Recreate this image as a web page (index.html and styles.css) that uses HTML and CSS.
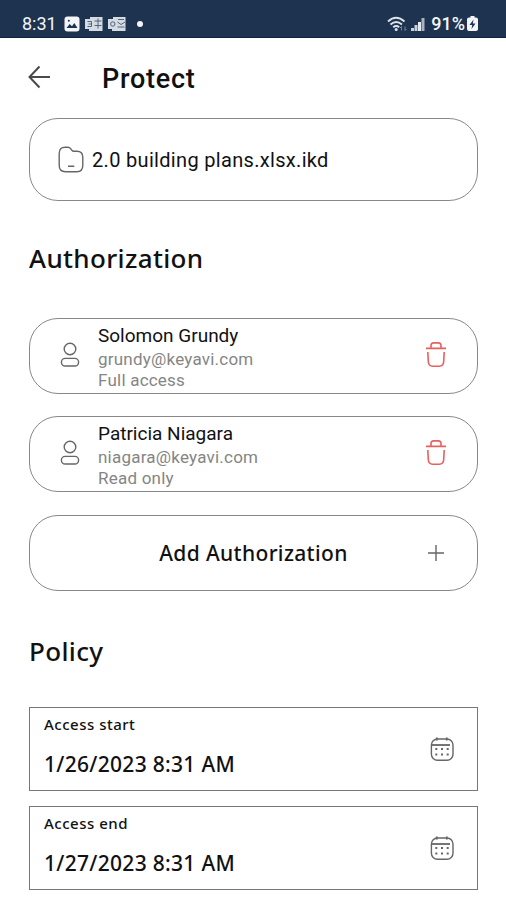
FILE: index.html
```html
<!DOCTYPE html>
<html lang="en">
<head>
    <meta charset="UTF-8">
    <meta name="viewport" content="width=device-width, initial-scale=1.0">
    <title>Protect</title>
    <link rel="stylesheet" href="styles.css">
</head>
<body>
<svg class="sprite" width="0" height="0">
    <symbol id="user" viewBox="0 0 20 26">
        <circle cx="10" cy="7" r="5.8"/>
        <rect x="1.4" y="16.4" width="17.2" height="7.6" rx="3.8"/>
    </symbol>
    <symbol id="trash" viewBox="0 0 22 26">
        <path d="M1 7.400h20M6 7.400V4.600q0-2.700 2.600-2.700h4.800q2.600 0 2.600 2.700v2.800M2.800 11l.5 9.500q.3 4.700 4.400 4.700h6.600q4.100 0 4.400-4.700l.5-9.500"/>
    </symbol>
    <symbol id="calendar" viewBox="0 0 24 26">
        <rect x="1.4" y="3" width="21.6" height="21.200" rx="6"/>
        <path d="M1.500 9h18.500" stroke-width="1.800"/>
        <path d="M6.800 1.500v3M16.800 1.500v3M5.300 13h2M11 13h2M16.700 13h2M5.300 18.500h2M11 18.500h2M16.700 18.500h2" stroke-width="1.800"/>
    </symbol>
</svg>

<div class="status">
    <span class="time">8:31</span>
    <svg width="16" height="16" viewBox="0 0 16 16">
        <rect x=".5" y=".5" width="15" height="15" rx="3" fill="#f3f5f8"/>
        <path d="M2.500 12l3.200-4 2.300 2.300 2.300-3.300 3.200 5z" fill="#1d3350"/>
        <circle cx="4.800" cy="4.800" r="1" fill="#1d3350"/>
    </svg>
    <svg class="mail" width="18" height="16" viewBox="0 0 18 16">
        <path d="M5 1h12.500v14H4v-2H0V3h5z" fill="#d5dbe3"/>
        <path d="M9.500 5h7M9.500 9.500h7M13 2.500v10" stroke="#52637a"/>
        <path d="M2.500 5.500h4v5h-4M3.500 8h3" fill="none" stroke="#52637a"/>
    </svg>
    <svg class="mail" width="18" height="16" viewBox="0 0 18 16">
        <path d="M5 1h12.500v14H4v-2H0V3h5z" fill="#d5dbe3"/>
        <path d="M9.500 6l3.500 2.500L17 6M9.500 11h7M10 3.500h6" fill="none" stroke="#52637a"/>
        <circle cx="4.800" cy="8" r="2.200" fill="none" stroke="#52637a"/>
    </svg>
    <span class="dot"></span>
    <svg class="wifi" width="22" height="16" viewBox="0 0 22 16">
        <path d="M1 5.500q8-7.500 16.500 0M3.500 8.500q5.700-5 11.500 0M6.200 11.300q3-2.500 6 0" fill="none" stroke="#dfe4ea" stroke-width="1.800"/>
        <circle cx="9.200" cy="13.500" r="1.500" fill="#dfe4ea"/>
        <path d="M14.500 14.500v-4m-1.500 1.500l1.500-1.500M18 10.500v4m1.500-1.500L18 14.500" fill="none" stroke="#76859a"/>
    </svg>
    <svg class="signal" width="14" height="14" viewBox="0 0 14 14">
        <path d="M0 11h3v3H0zM3.500 8H6.500V14H3.500z" fill="#c9d0d9"/>
        <path d="M7 5h3V14H7z" fill="#e6eaee"/>
        <path d="M10.500 1H13.500v13h-3z" fill="#a9b3c0"/>
    </svg>
    <span class="percent">91%</span>
    <svg class="battery" width="11" height="15" viewBox="0 0 11 15">
        <path d="M3.500 0h4v1.500H9q2 0 2 2V13q0 2-2 2H2q-2 0-2-2V3.500q0-2 2-2h1.500z" fill="#f3f5f8"/>
        <path d="M6.500 3.500L2.500 9h2.700l-.7 4 4-5.500H5.800z" fill="#1d3350"/>
    </svg>
</div>

<header class="app-bar">
    <svg width="24" height="24" viewBox="0 0 24 24">
        <path d="M12.500 1.500L2.500 12l10 10.500M2.500 12h20.500" fill="none" stroke="#4a4a4a" stroke-width="2"/>
    </svg>
    <h1>Protect</h1>
</header>

<main>
    <div class="card file">
        <svg class="icon" width="26" height="27" viewBox="0 0 26 27">
            <path d="M1.200 7.500q0-6.300 6-6.300h2.600q1.800 0 3 1.600l1.100 1.500q.7.900 2 .9h3q5.900 0 5.900 6v8q0 6.500-6 6.500H7.400q-6.200 0-6.200-6.400zM10 20.200h6.300"/>
        </svg>
        <span>2.0 building plans.xlsx.ikd</span>
    </div>

    <h2>Authorization</h2>

    <div class="card person">
        <svg class="icon" width="20" height="26"><use href="#user"/></svg>
        <div class="info">
            <div class="name">Solomon Grundy</div>
            <div class="email">grundy@keyavi.com</div>
            <div class="access">Full access</div>
        </div>
        <svg class="icon trash" width="22" height="26"><use href="#trash"/></svg>
    </div>
    <div class="card person">
        <svg class="icon" width="20" height="26"><use href="#user"/></svg>
        <div class="info">
            <div class="name">Patricia Niagara</div>
            <div class="email">niagara@keyavi.com</div>
            <div class="access">Read only</div>
        </div>
        <svg class="icon trash" width="22" height="26"><use href="#trash"/></svg>
    </div>
    <div class="card add">
        <span>Add Authorization</span>
        <svg class="icon plus" width="16" height="16" viewBox="0 0 16 16"><path d="M8 0v16M0 8h16"/></svg>
    </div>

    <h2 class="policy">Policy</h2>

    <div class="field">
        <div>
            <div class="label">Access start</div>
            <div class="value">1/26/2023 8:31 AM</div>
        </div>
        <svg class="icon" width="24" height="26"><use href="#calendar"/></svg>
    </div>
    <div class="field">
        <div>
            <div class="label">Access end</div>
            <div class="value">1/27/2023 8:31 AM</div>
        </div>
        <svg class="icon" width="24" height="26"><use href="#calendar"/></svg>
    </div>
</main>
</body>
</html>
```
FILE: styles.css
```css
* {
    box-sizing: border-box;
    margin: 0;
    padding: 0;
}
body {
    width: 506px;
    height: 900px;
    overflow: hidden;
    background: #fff;
    color: #111;
    font-family: Roboto, "Liberation Sans", sans-serif;
}
.sprite {
    display: block;
}
svg {
    flex: none;
}

/* status bar */
.status {
    display: flex;
    align-items: center;
    height: 38px;
    padding: 10px 28px 0 22px;
    background: #1d3350;
    border-bottom: 1px solid #0e2140;
    color: #f3f5f8;
    font-size: 18px;
    line-height: 26px;
}
.time {
    width: 42px;
}
.mail {
    margin-left: 5px;
}
.dot {
    width: 6px;
    height: 6px;
    margin-left: 11px;
    border-radius: 50%;
    background: #f3f5f8;
}
.wifi {
    margin-left: auto;
}
.signal {
    margin: 0 6px 0 2px;
}
.percent {
    font-weight: 500;
}
.battery {
    margin-left: 2px;
}

/* title */
.app-bar {
    display: flex;
    align-items: center;
    height: 80px;
    padding: 0 0 2px 27px;
}
.app-bar h1 {
    padding-top: 3px;
    margin-left: 51px;
    font-size: 27px;
    font-weight: 500;
    letter-spacing: 0.75px;
}

main {
    padding: 0 28px 0 29px;
}
.card {
    display: flex;
    align-items: center;
    height: 76px;
    margin-bottom: 22px;
    border: 1px solid #888;
    border-radius: 29px;
}
.icon {
    fill: none;
    stroke: #666;
    stroke-width: 1.4;
}
.file {
    height: 83px;
    margin-bottom: 0;
    padding-left: 28px;
    font-size: 20px;
    letter-spacing: 0.32px;
}
.file span {
    margin-left: 8px;
}
h2 {
    height: 117px;
    font: 500 26px/114px "Noto Sans", sans-serif;
    letter-spacing: 0.35px;
}
.policy {
    height: 116px;
    line-height: 120px;
}
.person {
    padding: 0 30px 2px;
}
.info {
    flex: 1;
    padding-top: 3px;
    margin-left: 18px;
}
.name {
    font-size: 19px;
    line-height: 26px;
}
.email, .access {
    color: #858585;
    font-size: 17px;
    line-height: 21px;
    letter-spacing: 0.22px;
}
.trash {
    margin-top: -2px;
    stroke: #e8605e;
    stroke-width: 1.6;
}
.add {
    position: relative;
    justify-content: center;
    margin: 23px 0 0;
    font: 500 21px "Noto Sans", sans-serif;
    letter-spacing: 0.35px;
}
.plus {
    position: absolute;
    right: 33px;
}

/* date fields */
.field {
    display: flex;
    justify-content: space-between;
    align-items: center;
    height: 84px;
    margin-bottom: 15px;
    padding: 0 23px 0 14px;
    border: 1px solid #777;
    font-family: "Noto Sans", sans-serif;
    font-weight: 500;
}
.label {
    font-size: 15px;
    line-height: 30px;
    letter-spacing: 0.5px;
}
.value {
    font-size: 21px;
    line-height: 50px;
    letter-spacing: 0.3px;
}
```
